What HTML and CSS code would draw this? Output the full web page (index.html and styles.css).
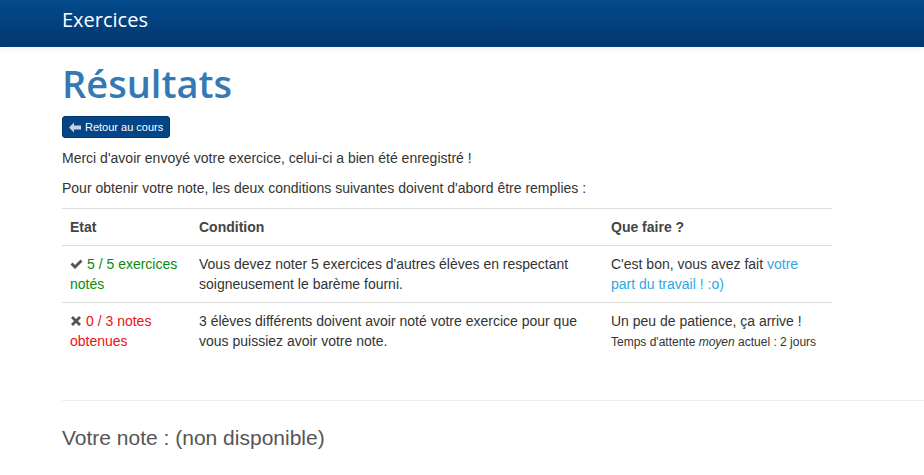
FILE: index.html
```html
<!DOCTYPE html>
<html lang="fr">
<head>
<meta charset="utf-8">
<title>Résultats</title>
<link rel="stylesheet" href="styles.css">
</head>
<body>
<header class="topbar">
  <div class="topbar-inner">Exercices</div>
</header>
<main class="page">
  <h1 class="title">Résultats</h1>
  <a class="btn-back" href="#"><svg class="arrow" width="12" height="11" viewBox="0 0 12 11"><path d="M0 5.5 L5 0.5 L5 3.5 L12 3.5 L12 7.5 L5 7.5 L5 10.5 Z" fill="#c9d3de"/></svg>Retour au cours</a>
  <p class="msg">Merci d'avoir envoyé votre exercice, celui-ci a bien été enregistré !</p>
  <p class="msg">Pour obtenir votre note, les deux conditions suivantes doivent d'abord être remplies :</p>
  <table class="cond">
    <thead>
      <tr><th class="c1">Etat</th><th class="c2">Condition</th><th class="c3">Que faire ?</th></tr>
    </thead>
    <tbody>
      <tr>
        <td><span class="ok"><svg class="ico" width="13" height="12" viewBox="0 0 13 12"><path d="M0.5 6.5 L2.5 4.5 L5 7 L10.5 1.5 L12.5 3.5 L5 11 Z" fill="#555"/></svg>5 / 5 exercices notés</span></td>
        <td>Vous devez noter 5 exercices d'autres élèves en respectant soigneusement le barème fourni.</td>
        <td>C'est bon, vous avez fait <a class="lnk" href="#">votre part du travail ! :o)</a></td>
      </tr>
      <tr>
        <td><span class="ko"><svg class="ico" width="12" height="12" viewBox="0 0 12 12"><path d="M1 3 L3 1 L6 4 L9 1 L11 3 L8 6 L11 9 L9 11 L6 8 L3 11 L1 9 L4 6 Z" fill="#555"/></svg>0 / 3 notes obtenues</span></td>
        <td>3 élèves différents doivent avoir noté votre exercice pour que vous puissiez avoir votre note.</td>
        <td>Un peu de patience, ça arrive !<br><small class="wait">Temps d'attente <em>moyen</em> actuel : 2 jours</small></td>
      </tr>
    </tbody>
  </table>
  <hr class="sep">
  <h3 class="note">Votre note : (non disponible)</h3>
</main>
</body>
</html>
```
FILE: styles.css
```css
* { box-sizing: border-box; }
html, body { margin: 0; padding: 0; }
body {
  font-family: "Liberation Sans", Arial, sans-serif;
  font-size: 14px;
  line-height: 20px;
  color: #333;
  background: #fff;
  overflow: hidden;
}
.topbar {
  height: 47px;
  background: linear-gradient(#044a8c, #02376f);
  box-shadow: 0 2px 6px rgba(0,0,0,0.06);
}
.topbar-inner {
  padding-left: 62px;
  font-family: "Open Sans", sans-serif;
  font-size: 20px;
  line-height: 40px;
  color: #fff;
}
.page {
  padding-left: 62px;
}
.title {
  margin: 11px 0 8px;
  font-family: "Open Sans", sans-serif;
  font-weight: 600;
  font-size: 38px;
  line-height: 50px;
  color: #3479b3;
}
.btn-back {
  display: inline-flex;
  align-items: center;
  gap: 4px;
  height: 22px;
  padding: 0 6px;
  background: #034587;
  border: 1px solid #02386e;
  border-radius: 3px;
  color: #fff;
  font-size: 11px;
  white-space: nowrap;
  text-decoration: none;
  margin-bottom: 10px;
}
.msg {
  margin: 0 0 10px;
}
.cond {
  width: 770px;
  border-collapse: collapse;
  border-spacing: 0;
}
.cond th, .cond td {
  padding: 8px;
  text-align: left;
  vertical-align: top;
  border-top: 1px solid #ddd;
}
.cond th {
  font-weight: bold;
  color: #444;
  border-bottom: 1px solid #ddd;
}
.c1 { width: 129px; }
.c2 { width: 412px; }
.c3 { width: 229px; }
.ico { margin-right: 4px; vertical-align: -1px; }
.ok { color: #0a8a0a; }
.ko { color: #ee1111; }
.lnk { color: #2ea7e6; text-decoration: none; }
.wait { font-size: 12px; color: #333; line-height: 20px; }
.sep {
  margin: 40px 0 20px;
  border: 0;
  border-top: 1px solid #eee;
  width: 900px;
}
.note {
  margin: 0;
  font-weight: normal;
  font-size: 21px;
  line-height: 34px;
  color: #555;
}
```
